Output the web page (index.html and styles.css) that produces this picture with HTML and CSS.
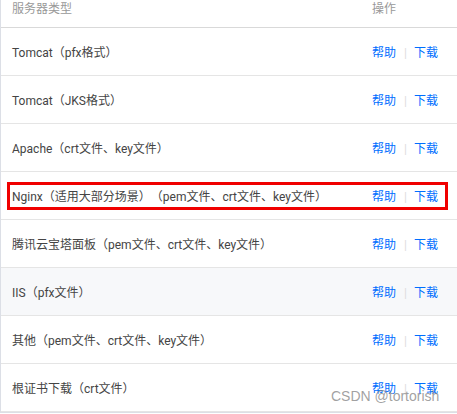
FILE: index.html
```html
<!DOCTYPE html>
<html lang="zh-CN">
<head>
    <meta charset="UTF-8">
    <title>证书下载</title>
    <link rel="stylesheet" href="styles.css">
</head>
<body>
    <div class="cert-table">
        <div class="row row-head">
            <div class="cell-name">服务器类型</div>
            <div class="cell-op">操作</div>
        </div>
        <div class="row">
            <div class="cell-name">Tomcat（pfx格式）</div>
            <div class="cell-op"><a href="#">帮助</a><span class="sep">|</span><a href="#">下载</a></div>
        </div>
        <div class="row">
            <div class="cell-name">Tomcat（JKS格式）</div>
            <div class="cell-op"><a href="#">帮助</a><span class="sep">|</span><a href="#">下载</a></div>
        </div>
        <div class="row">
            <div class="cell-name">Apache（crt文件、key文件）</div>
            <div class="cell-op"><a href="#">帮助</a><span class="sep">|</span><a href="#">下载</a></div>
        </div>
        <div class="row row-marked">
            <div class="cell-name">Nginx（适用大部分场景）（pem文件、crt文件、key文件）</div>
            <div class="cell-op"><a href="#">帮助</a><span class="sep">|</span><a href="#">下载</a></div>
        </div>
        <div class="row">
            <div class="cell-name">腾讯云宝塔面板（pem文件、crt文件、key文件）</div>
            <div class="cell-op"><a href="#">帮助</a><span class="sep">|</span><a href="#">下载</a></div>
        </div>
        <div class="row row-hover">
            <div class="cell-name">IIS（pfx文件）</div>
            <div class="cell-op"><a href="#">帮助</a><span class="sep">|</span><a href="#">下载</a></div>
        </div>
        <div class="row">
            <div class="cell-name">其他（pem文件、crt文件、key文件）</div>
            <div class="cell-op"><a href="#">帮助</a><span class="sep">|</span><a href="#">下载</a></div>
        </div>
        <div class="row">
            <div class="cell-name">根证书下载（crt文件）</div>
            <div class="cell-op"><a href="#">帮助</a><span class="sep">|</span><a href="#">下载</a></div>
        </div>
    </div>
    <div class="watermark">CSDN @tortorish</div>
</body>
</html>
```

FILE: styles.css
```css
body {
    margin: 0;
    font-family: Roboto, "Noto Sans CJK SC", sans-serif;
    font-size: 12px;
    color: #444;
    background: #fff;
    position: relative;
    height: 414px;
    overflow: hidden;
    text-spacing-trim: space-all;
}
.cert-table {
    border-left: 1px solid #dcdfe6;
    border-bottom: 1px solid #dcdfe6;
    box-sizing: border-box;
    height: 413px;
}
.row {
    display: flex;
    align-items: center;
    height: 47px;
    border-bottom: 1px solid #e5e5e5;
    position: relative;
}
.row-head {
    align-items: flex-start;
    border-bottom-color: #d9d9d9;
    color: #999;
    line-height: 16px;
    padding-top: 1px;
    box-sizing: border-box;
    height: 28px;
}
.row-hover {
    background-color: #f7f8fa;
}
.cell-name {
    flex: 1;
    padding-left: 11px;
    white-space: nowrap;
}
.cell-op {
    width: 85px;
    white-space: nowrap;
}
.cell-op a {
    color: #006eff;
    text-decoration: none;
}
.sep {
    color: #ddd;
    margin: 0 7px 0 8px;
}

/* 标注框 */
.row-marked::after {
    content: '';
    position: absolute;
    left: 6px;
    right: 9px;
    top: 10px;
    bottom: 9px;
    border: 3px solid #f00000;
}
.watermark {
    position: absolute;
    left: 331px;
    top: 388px;
    font-family: "Liberation Sans", "Noto Sans CJK SC", sans-serif;
    font-size: 14px;
    color: rgba(130, 130, 130, 0.75);
}
```
